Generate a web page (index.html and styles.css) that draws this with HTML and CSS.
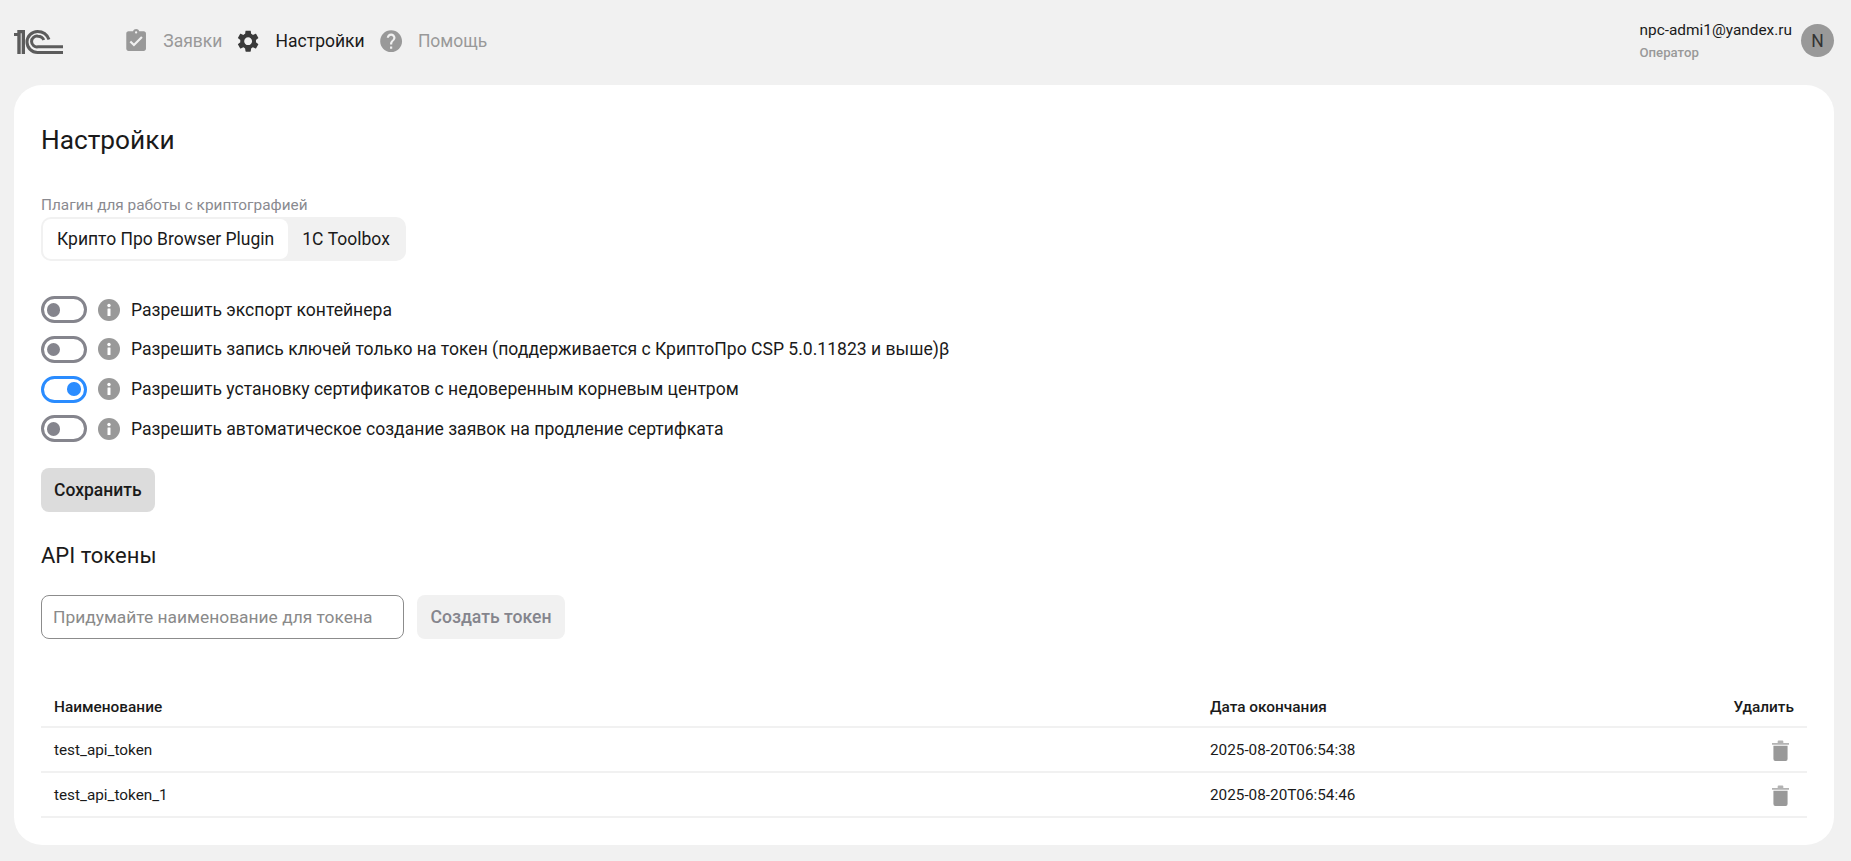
FILE: index.html
```html
<!DOCTYPE html>
<html lang="ru">
<head>
<meta charset="utf-8">
<title>Настройки</title>
<link rel="stylesheet" href="styles.css">
</head>
<body>
<header class="topbar">
  <svg class="logo" viewBox="0 0 49 24" aria-hidden="true">
    <path fill="#5c5c5c" d="M0 3h3.300V0H11v24H7.700V3.200H6.700V24H3.300V6H0z"/>
    <g fill="none" stroke="#5c5c5c" stroke-width="3">
      <path d="M49 22.500H23.500A10.500 10.500 0 1 1 23.500 1.500c5.600 0 9.600 3 11.500 8"/>
      <path d="M49 16.800H24A5.400 5.400 0 1 1 24 6.200c2.800 0 4.800 1.400 5.800 3.800"/>
    </g>
  </svg>
  <nav class="nav">
    <a class="nav-item">
      <svg class="nav-icon muted" viewBox="0 0 24 24"><path d="M19 3h-4.180C14.400 1.840 13.300 1 12 1s-2.400.84-2.820 2H5c-1.100 0-2 .9-2 2v14c0 1.100.9 2 2 2h14c1.100 0 2-.9 2-2V5c0-1.100-.9-2-2-2zm-7 0c.55 0 1 .45 1 1s-.45 1-1 1-1-.45-1-1 .45-1 1-1zm-2 14-4-4 1.410-1.410L10 14.170l6.590-6.590L18 9l-8 8z"/></svg>
      <span class="nav-label muted-text">Заявки</span>
    </a>
    <a class="nav-item">
      <svg class="nav-icon dark" viewBox="0 0 24 24"><path d="M19.140 12.940c.04-.3.060-.61.060-.94 0-.32-.02-.64-.07-.94l2.030-1.580c.18-.14.230-.41.120-.61l-1.920-3.320c-.12-.22-.37-.29-.59-.22l-2.390.96c-.5-.38-1.030-.7-1.620-.94l-.36-2.540c-.04-.24-.24-.41-.48-.41h-3.840c-.24 0-.43.17-.47.41l-.36 2.540c-.59.24-1.130.57-1.620.94l-2.390-.96c-.22-.08-.47 0-.59.22L2.740 8.870c-.12.210-.08.470.12.610l2.030 1.580c-.05.300-.09.630-.09.940s.02.640.07.940l-2.030 1.580c-.18.140-.23.410-.12.610l1.920 3.320c.12.220.37.290.59.220l2.390-.96c.5.380 1.030.7 1.620.94l.36 2.540c.05.240.24.410.48.410h3.840c.24 0 .44-.17.47-.41l.36-2.540c.59-.24 1.130-.56 1.620-.94l2.390.96c.22.080.47 0 .59-.22l1.920-3.320c.12-.22.070-.47-.12-.61l-2.010-1.580zM12 15.600c-1.980 0-3.600-1.620-3.600-3.600s1.620-3.600 3.600-3.600 3.600 1.620 3.600 3.600-1.620 3.600-3.600 3.600z"/></svg>
      <span class="nav-label">Настройки</span>
    </a>
    <a class="nav-item">
      <svg class="nav-icon muted" viewBox="0 0 24 24"><path d="M12 2C6.480 2 2 6.480 2 12s4.480 10 10 10 10-4.480 10-10S17.520 2 12 2zm1 17h-2v-2h2v2zm2.070-7.750-.9.920C13.450 12.900 13 13.500 13 15h-2v-.5c0-1.100.45-2.100 1.170-2.830l1.240-1.260c.37-.36.590-.86.590-1.410 0-1.100-.9-2-2-2s-2 .9-2 2H8c0-2.210 1.790-4 4-4s4 1.790 4 4c0 .88-.36 1.680-.93 2.250z"/></svg>
      <span class="nav-label muted-text">Помощь</span>
    </a>
  </nav>
  <div class="user">
    <div class="user-info">
      <div class="user-mail">npc-admi1@yandex.ru</div>
      <div class="user-role">Оператор</div>
    </div>
    <div class="avatar">N</div>
  </div>
</header>
<main class="card">
  <h1 class="page-title">Настройки</h1>
  <div class="field-label">Плагин для работы с криптографией</div>
  <div class="segmented">
    <div class="segment active">Крипто Про Browser Plugin</div>
    <div class="segment">1С Toolbox</div>
  </div>
  <ul class="options">
    <li class="option">
      <span class="toggle"><span class="knob"></span></span>
      <svg class="info" viewBox="0 0 22 22"><circle cx="11" cy="11" r="11"/><rect class="info-mark" x="9.500" y="9.500" width="3" height="7.500" rx=".5"/><circle class="info-mark" cx="11" cy="6.500" r="1.700"/></svg>
      <span>Разрешить экспорт контейнера</span>
    </li>
    <li class="option">
      <span class="toggle"><span class="knob"></span></span>
      <svg class="info" viewBox="0 0 22 22"><circle cx="11" cy="11" r="11"/><rect class="info-mark" x="9.500" y="9.500" width="3" height="7.500" rx=".5"/><circle class="info-mark" cx="11" cy="6.500" r="1.700"/></svg>
      <span>Разрешить запись ключей только на токен (поддерживается с КриптоПро CSP 5.0.11823 и выше)β</span>
    </li>
    <li class="option">
      <span class="toggle on"><span class="knob"></span></span>
      <svg class="info" viewBox="0 0 22 22"><circle cx="11" cy="11" r="11"/><rect class="info-mark" x="9.500" y="9.500" width="3" height="7.500" rx=".5"/><circle class="info-mark" cx="11" cy="6.500" r="1.700"/></svg>
      <span>Разрешить установку сертификатов с недоверенным корневым центром</span>
    </li>
    <li class="option">
      <span class="toggle"><span class="knob"></span></span>
      <svg class="info" viewBox="0 0 22 22"><circle cx="11" cy="11" r="11"/><rect class="info-mark" x="9.500" y="9.500" width="3" height="7.500" rx=".5"/><circle class="info-mark" cx="11" cy="6.500" r="1.700"/></svg>
      <span>Разрешить автоматическое создание заявок на продление сертифката</span>
    </li>
  </ul>
  <button class="btn btn-save" type="button">Сохранить</button>
  <h2 class="section-title">API токены</h2>
  <div class="token-form">
    <input class="token-input" type="text" placeholder="Придумайте наименование для токена">
    <button class="btn btn-create" type="button">Создать токен</button>
  </div>
  <table class="tokens">
    <thead>
      <tr><th>Наименование</th><th class="col-date">Дата окончания</th><th class="col-del">Удалить</th></tr>
    </thead>
    <tbody>
      <tr>
        <td>test_api_token</td><td class="col-date">2025-08-20T06:54:38</td>
        <td class="col-del"><svg class="trash" viewBox="0 0 18 22"><path class="lid" d="M0 3h18v2H0zM6 1.500Q6 .5 7 .5h4q1 0 1 1V3H6z"/><path d="M1.500 6h15v14a2 2 0 0 1-2 2h-11a2 2 0 0 1-2-2z"/></svg></td>
      </tr>
      <tr>
        <td>test_api_token_1</td><td class="col-date">2025-08-20T06:54:46</td>
        <td class="col-del"><svg class="trash" viewBox="0 0 18 22"><path class="lid" d="M0 3h18v2H0zM6 1.500Q6 .5 7 .5h4q1 0 1 1V3H6z"/><path d="M1.500 6h15v14a2 2 0 0 1-2 2h-11a2 2 0 0 1-2-2z"/></svg></td>
      </tr>
    </tbody>
  </table>
</main>
</body>
</html>
```
FILE: styles.css
```css
* { box-sizing: border-box; }
html, body { height: 100%; }
body {
  margin: 0;
  background: #f1f1f1;
  color: #1a1a1a;
  font-family: Roboto, "Noto Sans", sans-serif;
  font-size: 17.5px;
  overflow: hidden;
}
.topbar {
  height: 85px;
  padding: 0 17px 0 14px;
  display: flex;
  align-items: center;
}
.logo { width: 49px; height: 24px; flex: none; margin-right: 60px; margin-top: -2px; }
.nav { display: flex; align-items: center; gap: 13px; margin-top: -2px; }
.nav-item { display: flex; align-items: center; gap: 14px; }
.nav-icon { width: 26.250px; height: 26.250px; flex: none; }
.muted { fill: #999; }
.dark { fill: #3a3a3a; }
.nav-label { font-size: 17.500px; line-height: 24px; margin-top: -1px; }
.muted-text { color: #999; }
.user { margin-left: auto; display: flex; align-items: center; gap: 9px; margin-top: -4px; }
.user-info { display: flex; flex-direction: column; gap: 5px; }
.user-mail { font-size: 15.400px; line-height: 20px; }
.user-role { font-size: 13.200px; line-height: 16px; font-weight: 500; color: #999; }
.avatar {
  width: 33px; height: 33px; border-radius: 50%;
  background: #999; color: #333;
  display: flex; align-items: center; justify-content: center;
  font-size: 17.500px;
}
.card {
  margin: 0 17px 0 14px;
  height: 760px;
  background: #fff;
  border-radius: 28px;
  padding: 38px 27px 0;
}
.page-title { margin: 0; font-size: 26.250px; line-height: 34px; font-weight: 400; }
.field-label { margin-top: 39px; font-size: 15.360px; line-height: 18px; color: #8a8a90; }
.segmented {
  margin-top: 3px;
  display: inline-flex;
  height: 44px;
  padding: 2px;
  background: #f1f1f1;
  border-radius: 10px;
  vertical-align: top;
}
.segment { display: flex; align-items: center; padding: 0 14px; border-radius: 8px; }
.segment.active { background: #fff; }
.options { list-style: none; margin: 29px 0 0; padding: 0; display: flex; flex-direction: column; font-size: 17.570px; }
.option { height: 39.670px; display: flex; align-items: center; }
.toggle {
  width: 46px; height: 27px;
  border: 3.500px solid #85858d;
  border-radius: 14px;
  display: flex; align-items: center;
  padding: 0 2.500px;
  flex: none;
}
.knob { width: 13.500px; height: 13.500px; border-radius: 50%; background: #85858d; }
.toggle.on { border-color: #2a8cff; justify-content: flex-end; padding-right: 3.500px; }
.toggle.on .knob { background: #2a8cff; }
.info { width: 22px; height: 22px; margin: 0 11px; flex: none; fill: #999; }
.info-mark { fill: #fff; }
.btn {
  border: 0;
  border-radius: 8px;
  height: 44px;
  font-family: inherit;
  font-size: 17.500px;
  font-weight: 500;
  padding: 0 13px;
}
.btn-save { display: block; margin-top: 19.320px; background: #dcdcdc; color: #1a1a1a; }
.section-title { margin: 30px 0 0; font-size: 22px; line-height: 28px; font-weight: 400; }
.token-form { margin-top: 25px; display: flex; gap: 13px; }
.token-input {
  width: 363px; height: 44px;
  border: 1px solid #8c8c8c;
  border-radius: 8px;
  padding: 0 11px;
  font-family: inherit;
  font-size: 17.400px;
  outline: 0;
}
.token-input::placeholder { color: #8a8a8a; opacity: 1; }
.btn-create { background: #f1f1f1; color: #85858d; font-size: 17.600px; padding: 0 13.500px; }
.tokens { margin-top: 44px; width: 100%; border-collapse: collapse; font-size: 15.300px; table-layout: fixed; }
.tokens th { font-weight: 500; text-align: left; height: 44px; padding: 5px 13px 0; border-bottom: 2px solid #f1f1f1; font-size: 15.400px; }
.tokens td { height: 45px; padding: 2px 13px 0; border-bottom: 2px solid #f1f1f1; }
.tokens .col-date { width: 410px; }
.tokens .col-del { width: 200px; text-align: right; }
.trash { width: 17px; height: 21px; fill: #999; vertical-align: middle; margin-right: 5px; }
.lid { fill: #b3b3b3; }
```
